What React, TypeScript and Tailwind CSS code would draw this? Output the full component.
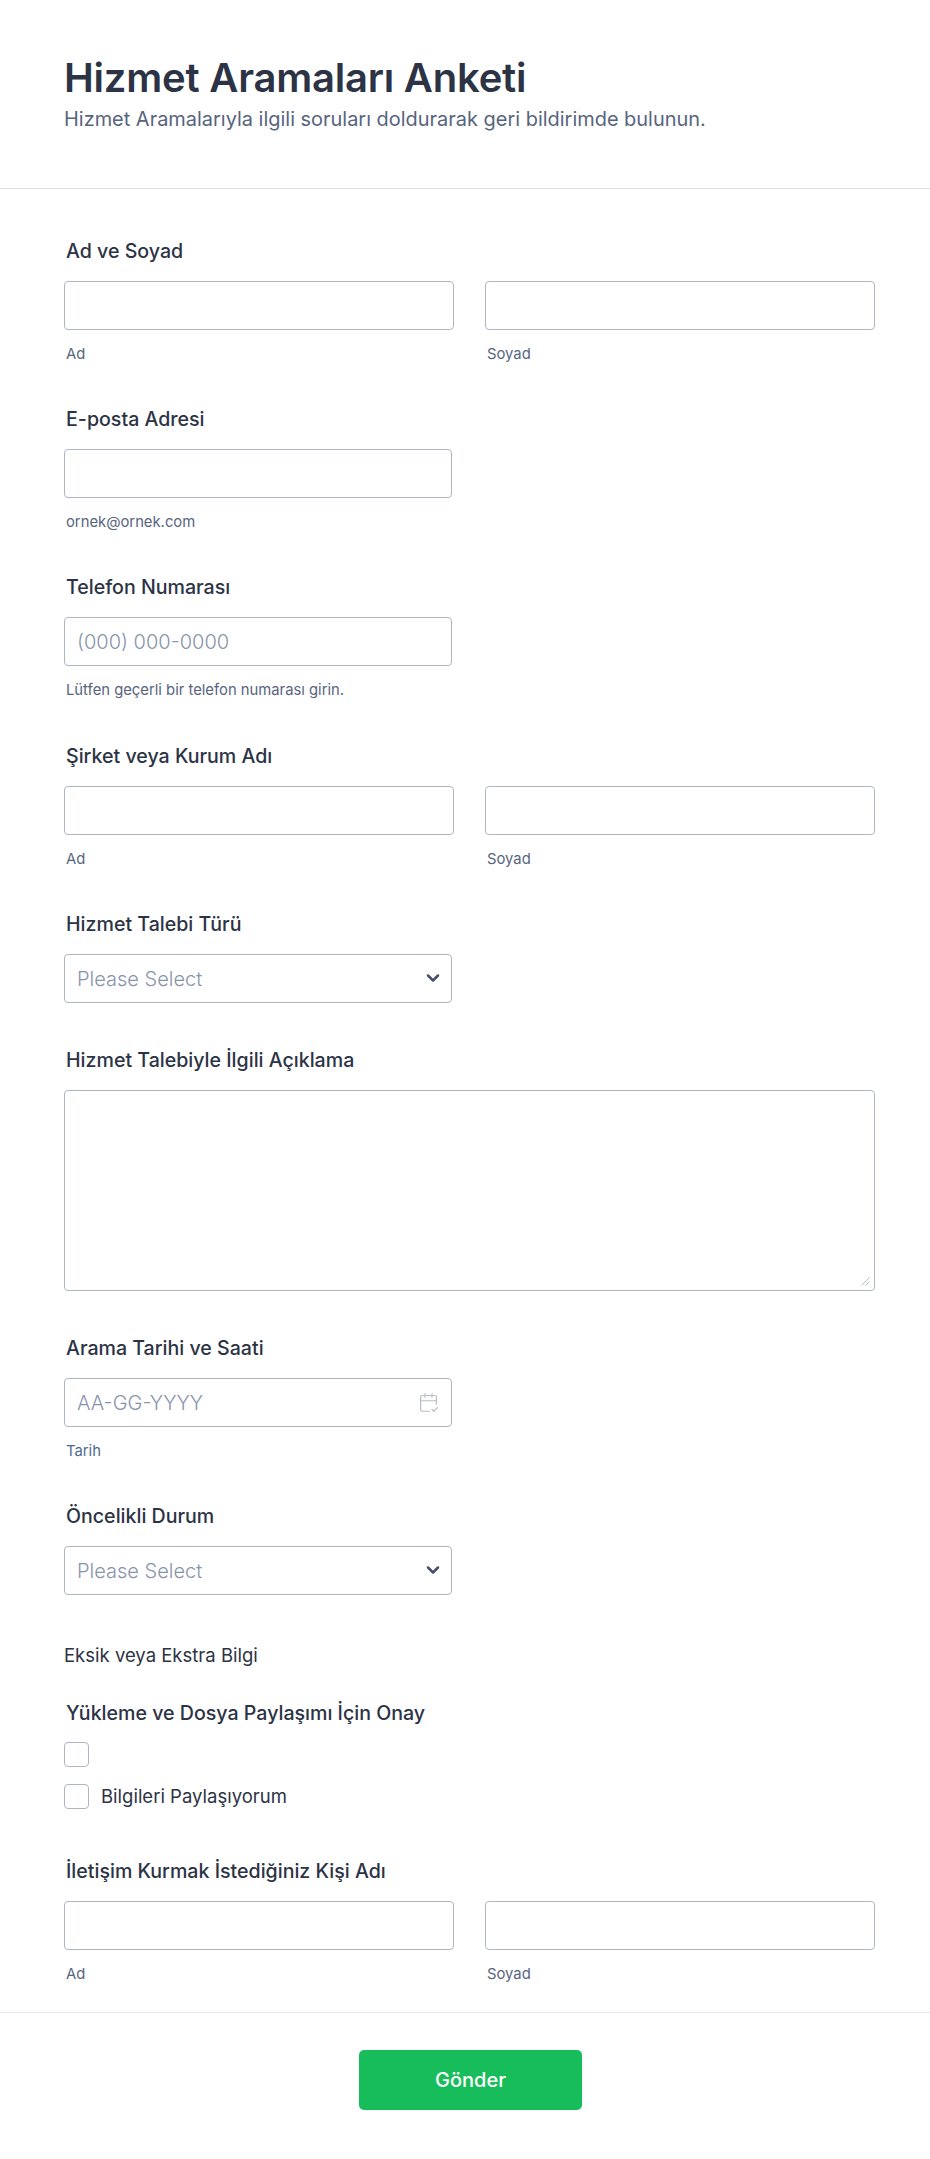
import { CalendarCheck2, ChevronDown } from "lucide-react";

const inputBase =
  "block h-[49px] rounded border border-[#b0b5c5] bg-white px-[12px] text-[20px] font-light text-[#2c3345] outline-none placeholder:text-[#8894ab]";

function Label({ children }: { children: React.ReactNode }) {
  return <label className="block pl-0.5 text-[19.6px] leading-[24px] font-medium text-[#2c3345]">{children}</label>;
}

function Sub({ children, blue }: { children: React.ReactNode; blue?: boolean }) {
  return (
    <p className={`mt-[15px] pl-0.5 text-[14.8px] leading-[18px] ${blue ? "text-[#4d6a8e]" : "text-[#57647e]"}`}>
      {children}
    </p>
  );
}

function NameRow() {
  return (
    <div className="mt-[18px] flex gap-[31px]">
      <div>
        <input className={`${inputBase} w-[390px]`} />
        <Sub>Ad</Sub>
      </div>
      <div>
        <input className={`${inputBase} w-[390px]`} />
        <Sub>Soyad</Sub>
      </div>
    </div>
  );
}

function SelectBox() {
  return (
    <div className="relative mt-[18px] w-[388px]">
      <select className={`${inputBase} w-full appearance-none text-[#8894ab]`}>
        <option>Please Select</option>
      </select>
      <ChevronDown className="absolute top-[14px] right-[9px] text-[#46506b]" size={20} strokeWidth={3} />
    </div>
  );
}

export default function App() {
  return (
    <div className="flex min-h-[2159px] flex-col bg-white font-['Inter',sans-serif]">
      <header className="h-[189px] border-b border-[#dfe1ea] px-16 pt-[54px]">
        <h1 className="text-[40px] leading-[48px] font-semibold tracking-[-0.22px] text-[#2c3345]">
          Hizmet Aramaları Anketi
        </h1>
        <p className="mt-1 text-[19.95px] leading-[26px] text-[#57647e]">
          Hizmet Aramalarıyla ilgili soruları doldurarak geri bildirimde bulunun.
        </p>
      </header>

      <main className="flex flex-col px-16 pt-[50px]">
        <section className="h-[168px]">
          <Label>Ad ve Soyad</Label>
          <NameRow />
        </section>

        <section className="h-[168px]">
          <Label>E-posta Adresi</Label>
          <input className={`${inputBase} mt-[18px] w-[388px]`} />
          <Sub>ornek@ornek.com</Sub>
        </section>

        <section className="h-[169px]">
          <Label>Telefon Numarası</Label>
          <input className={`${inputBase} mt-[18px] w-[388px]`} placeholder="(000) 000-0000" />
          <Sub>Lütfen geçerli bir telefon numarası girin.</Sub>
        </section>

        <section className="h-[168px]">
          <Label>Şirket veya Kurum Adı</Label>
          <NameRow />
        </section>

        <section className="h-[136px]">
          <Label>Hizmet Talebi Türü</Label>
          <SelectBox />
        </section>

        <section className="h-[288px]">
          <Label>Hizmet Talebiyle İlgili Açıklama</Label>
          <div className="relative mt-[18px] w-[811px]">
            <textarea className="block h-[201px] w-full resize-none rounded border border-[#b0b5c5] bg-white outline-none" />
            <svg className="absolute right-[5px] bottom-[5px] text-[#b8bdc9]" width="9" height="9" viewBox="0 0 9 9">
              <path d="M0.5 8.5 8.5 0.5M4.5 8.5 8.5 4.5" stroke="currentColor" fill="none" />
            </svg>
          </div>
        </section>

        <section className="h-[168px]">
          <Label>Arama Tarihi ve Saati</Label>
          <div className="relative mt-[18px] w-[388px]">
            <input className={`${inputBase} w-full`} placeholder="AA-GG-YYYY" />
            <CalendarCheck2 className="absolute top-[14px] right-[13px] text-[#b8bdc9]" size={21} strokeWidth={1.4} />
          </div>
          <Sub blue>Tarih</Sub>
        </section>

        <section className="h-[139px]">
          <Label>Öncelikli Durum</Label>
          <SelectBox />
        </section>

        <p className="text-[18.5px] leading-[24px] text-[#2c3345]">Eksik veya Ekstra Bilgi</p>

        <section className="mt-[34px] h-[158px]">
          <Label>Yükleme ve Dosya Paylaşımı İçin Onay</Label>
          <div className="mt-[17px] flex flex-col gap-[16px]">
            <input type="checkbox" className="h-[25px] w-[25px] appearance-none rounded border border-[#b0b5c5] bg-white" />
            <label className="flex items-center gap-[12px] text-[18.5px] text-[#2c3345]">
              <input type="checkbox" className="h-[25px] w-[25px] appearance-none rounded border border-[#b0b5c5] bg-white" />
              Bilgileri Paylaşıyorum
            </label>
          </div>
        </section>

        <section className="h-[153px]">
          <Label>İletişim Kurmak İstediğiniz Kişi Adı</Label>
          <NameRow />
        </section>
      </main>

      <footer className="flex justify-center border-t border-[#e6e8f0] pt-[37px] pl-[11px]">
        <button className="h-[60px] w-[223px] rounded-[5px] bg-[#18bd5b] text-[20px] font-medium text-white">Gönder</button>
      </footer>
    </div>
  );
}
